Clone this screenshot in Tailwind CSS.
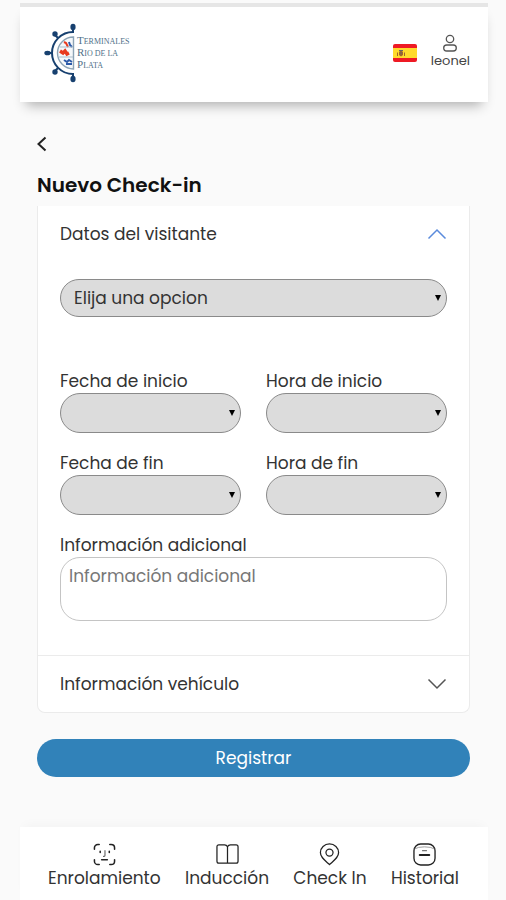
<!DOCTYPE html>
<html lang="es">
<head>
  <meta charset="UTF-8" />
  <title>Nuevo Check-in</title>
  <meta name="viewport" content="width=device-width, initial-scale=1" />
  <script src="https://cdn.jsdelivr.net/npm/@tailwindcss/browser@4"></script>
</head>
<body class="bg-[#fafafa] font-['Poppins','Inter',sans-serif] text-base text-[#333]">
  <div class="min-h-screen flex flex-col pl-5 pr-[18px] pt-[3px]">

    <header class="flex items-center justify-between h-[99px] pl-6 pr-[18px] pb-1 bg-white border-t-4 border-[#e6e6e6] shadow-[0_9px_12px_-6px_rgba(0,0,0,0.32)]">
      <a href="#" aria-label="Terminales Rio de la Plata" class="flex items-center gap-px">
        <svg class="w-8 h-[60px]" viewBox="0 0 32 60" fill="none">
          <!-- half ship wheel -->
          <path d="M29 9A21 21 0 0 0 29 51" stroke="#17406f" stroke-width="2" />
          <path d="M29.500 14A16 16 0 0 0 29.500 46Z" fill="#f5f8fa" stroke="#8ca3b5" stroke-width="1.400" />
          <path d="M29 10V3M14 15L10 11M8 30H3M14 45L10 49M29 50V57" stroke="#17406f" stroke-width="2" />
          <g fill="#17406f">
            <ellipse cx="29" cy="4" rx="2.600" ry="3.200" />
            <circle cx="11" cy="11" r="2.700" />
            <ellipse cx="3.500" cy="30" rx="3.200" ry="2.300" />
            <circle cx="11" cy="49" r="2.700" />
            <ellipse cx="29" cy="56" rx="2.600" ry="3.200" />
          </g>
          <path d="M16 28l3 2 2-2 2 3 2-1" stroke="#e8391d" stroke-width="3.400" />
          <path d="M20 19l2 1 2 4" stroke="#e8391d" stroke-width="2" />
          <path d="M25 19l1 3 2 2M20 37l3 2 2-2 3 2M22 41h6" stroke="#2c5aa8" stroke-width="2" />
          <path d="M15 34h14M16 24h13" stroke="#a9bccb" />
        </svg>
        <span class="flex flex-col font-['Liberation_Serif',serif] text-[8px] leading-[10px] text-[#4f7089] uppercase">
          <span class="first-letter:text-[11px]">Terminales</span>
          <span class="first-letter:text-[11px]">Rio de la</span>
          <span class="first-letter:text-[11px]">Plata</span>
        </span>
      </a>

      <div class="flex items-center gap-[14px]">
        <button type="button" aria-label="Español">
          <svg class="w-6 h-[18px]" viewBox="0 0 24 18">
            <rect width="24" height="18" rx="2" fill="#ee1a24" />
            <rect y="4" width="24" height="10" fill="#ffda2c" />
            <path d="M4 12V9l1-1v4zM12 12V9l-1-1v4zM6 8l2-2 2 2v3l-2 1.500L6 11z" fill="#a0652c" />
            <path d="M6 6.500h4M7 9h2" stroke="#666" />
          </svg>
        </button>
        <button type="button" class="flex flex-col items-center pb-1 text-[13px] leading-4 text-[#444]">
          <svg class="w-5 h-5" viewBox="0 0 20 20" fill="none" stroke="#555" stroke-width="1.300">
            <circle cx="10" cy="6" r="3.700" />
            <rect x="3.700" y="12" width="12.600" height="6" rx="3" />
          </svg>
          leonel
        </button>
      </div>
    </header>

    <main class="flex-1 pl-[17px] pr-[18px] pt-[30px]">
      <button type="button" aria-label="Volver" class="flex items-center h-6">
        <svg class="w-[10px] h-4" viewBox="0 0 10 16" fill="none" stroke="#222" stroke-width="2">
          <path d="M8.500 1.500L1.500 8l7 6.500" />
        </svg>
      </button>
      <h1 class="mt-4 text-[20px] leading-[26px] font-semibold text-[#111]">Nuevo Check-in</h1>

      <form>
        <div class="mt-2 bg-white border border-t-0 border-[#ebebeb] rounded-b-lg">
          <button type="button" aria-expanded="true" class="flex items-center justify-between w-full py-4 px-[22px] text-[17px] leading-6">
            Datos del visitante
            <svg class="w-5 h-5" viewBox="0 0 20 20" fill="none" stroke="#5b8bdc" stroke-width="1.500">
              <path d="M1.500 14.500L10 6l8.500 8.500" />
            </svg>
          </button>

          <div class="px-[22px] pt-[17px] pb-[34px] text-[17px] leading-6">
            <div class="relative">
              <select aria-label="Opción" class="block appearance-none w-full h-[38px] pl-[13px] pr-6 bg-[#dcdcdc] border border-[#8a8a8a] rounded-full">
                <option>Elija una opcion</option>
              </select>
              <svg class="absolute right-[6px] top-4 w-[6px] h-[6px] pointer-events-none" viewBox="0 0 6 6"><path d="M0 0h6L3 6z" /></svg>
            </div>

            <div class="mt-[52px] grid grid-cols-2 gap-x-[25px] gap-y-[18px]">
              <div>
                <label for="fechaInicio" class="block">Fecha de inicio</label>
                <div class="relative">
                  <select id="fechaInicio" class="block appearance-none w-full h-10 px-3 bg-[#dcdcdc] border border-[#8a8a8a] rounded-full"></select>
                  <svg class="absolute right-[6px] top-[17px] w-[6px] h-[6px] pointer-events-none" viewBox="0 0 6 6"><path d="M0 0h6L3 6z" /></svg>
                </div>
              </div>
              <div>
                <label for="horaInicio" class="block">Hora de inicio</label>
                <div class="relative">
                  <select id="horaInicio" class="block appearance-none w-full h-10 px-3 bg-[#dcdcdc] border border-[#8a8a8a] rounded-full"></select>
                  <svg class="absolute right-[6px] top-[17px] w-[6px] h-[6px] pointer-events-none" viewBox="0 0 6 6"><path d="M0 0h6L3 6z" /></svg>
                </div>
              </div>
              <div>
                <label for="fechaFin" class="block">Fecha de fin</label>
                <div class="relative">
                  <select id="fechaFin" class="block appearance-none w-full h-10 px-3 bg-[#dcdcdc] border border-[#8a8a8a] rounded-full"></select>
                  <svg class="absolute right-[6px] top-[17px] w-[6px] h-[6px] pointer-events-none" viewBox="0 0 6 6"><path d="M0 0h6L3 6z" /></svg>
                </div>
              </div>
              <div>
                <label for="horaFin" class="block">Hora de fin</label>
                <div class="relative">
                  <select id="horaFin" class="block appearance-none w-full h-10 px-3 bg-[#dcdcdc] border border-[#8a8a8a] rounded-full"></select>
                  <svg class="absolute right-[6px] top-[17px] w-[6px] h-[6px] pointer-events-none" viewBox="0 0 6 6"><path d="M0 0h6L3 6z" /></svg>
                </div>
              </div>
            </div>

            <label for="info" class="block mt-[18px]">Información adicional</label>
            <textarea id="info" placeholder="Información adicional" class="block w-full h-16 px-2 py-[6px] bg-white border border-[#c4c4c4] rounded-[20px] resize-none placeholder:text-[#777]"></textarea>
          </div>

          <button type="button" aria-expanded="false" class="flex items-center justify-between w-full py-4 px-[22px] text-[17px] leading-6 border-t border-[#ebebeb]">
            Información vehículo
            <svg class="w-5 h-5" viewBox="0 0 20 20" fill="none" stroke="#555" stroke-width="1.500">
              <path d="M1.500 5.500L10 14l8.500-8.500" />
            </svg>
          </button>
        </div>

        <button type="submit" class="mt-[26px] w-full h-[38px] rounded-full bg-[#3182b9] text-white text-[17px] leading-6">Registrar</button>
      </form>
    </main>

    <nav class="mt-[50px] flex justify-between pt-4 pb-[10px] pl-[28px] pr-[29px] bg-white text-[17px] leading-6 shadow-[0_-6px_10px_-4px_rgba(0,0,0,0.03)]">
      <a href="#" class="flex flex-col items-center">
        <svg class="w-[23px] h-[23px]" viewBox="0 0 24 24" fill="none" stroke="#222" stroke-width="1.600" stroke-linecap="round">
          <path d="M1.500 6.500V5a3.500 3.500 0 0 1 3.500-3.500h1.500M17.500 1.500H19A3.500 3.500 0 0 1 22.500 5v1.500M22.500 17.500V19a3.500 3.500 0 0 1-3.500 3.500h-1.500M6.500 22.500H5A3.500 3.500 0 0 1 1.500 19v-1.500" />
          <path d="M7.500 8.500v1.500M17 8.500v1.500M9 17.500h6" />
          <path d="M12.500 8v5q0 1-1.500 1" stroke="#666" stroke-width="1.200" />
        </svg>
        Enrolamiento
      </a>
      <a href="#" class="flex flex-col items-center">
        <svg class="w-[23px] h-[23px]" viewBox="0 0 24 24" fill="none" stroke="#222" stroke-width="1.300" stroke-linejoin="round">
          <path d="M12 4Q11 2 9 2H3Q1 2 1 4v15q0 2 2 2h9zM12 4q1-2 3-2h6q2 0 2 2v15q0 2-2 2h-9z" />
        </svg>
        Inducción
      </a>
      <a href="#" class="flex flex-col items-center">
        <svg class="w-[23px] h-[23px]" viewBox="0 0 24 24" fill="none" stroke="#222" stroke-width="1.300">
          <path d="M12 22.500C7 18 2.500 15 2.500 10a9.500 9 0 0 1 19 0c0 5-4.500 8-9.500 12.500z" />
          <circle cx="12" cy="10" r="3.700" />
        </svg>
        Check In
      </a>
      <a href="#" class="flex flex-col items-center">
        <svg class="w-[23px] h-[23px]" viewBox="0 0 24 24" fill="none" stroke="#222" stroke-width="1.400" stroke-linecap="round">
          <rect x="1" y="1" width="22" height="22" rx="7" />
          <path d="M2 6q3-2 10-2t10 2" stroke="#999" stroke-width="1" />
          <path d="M7 12.500h10" stroke-width="2" />
          <path d="M10 8h4" stroke="#777" />
        </svg>
        Historial
      </a>
    </nav>
  </div>
</body>
</html>
